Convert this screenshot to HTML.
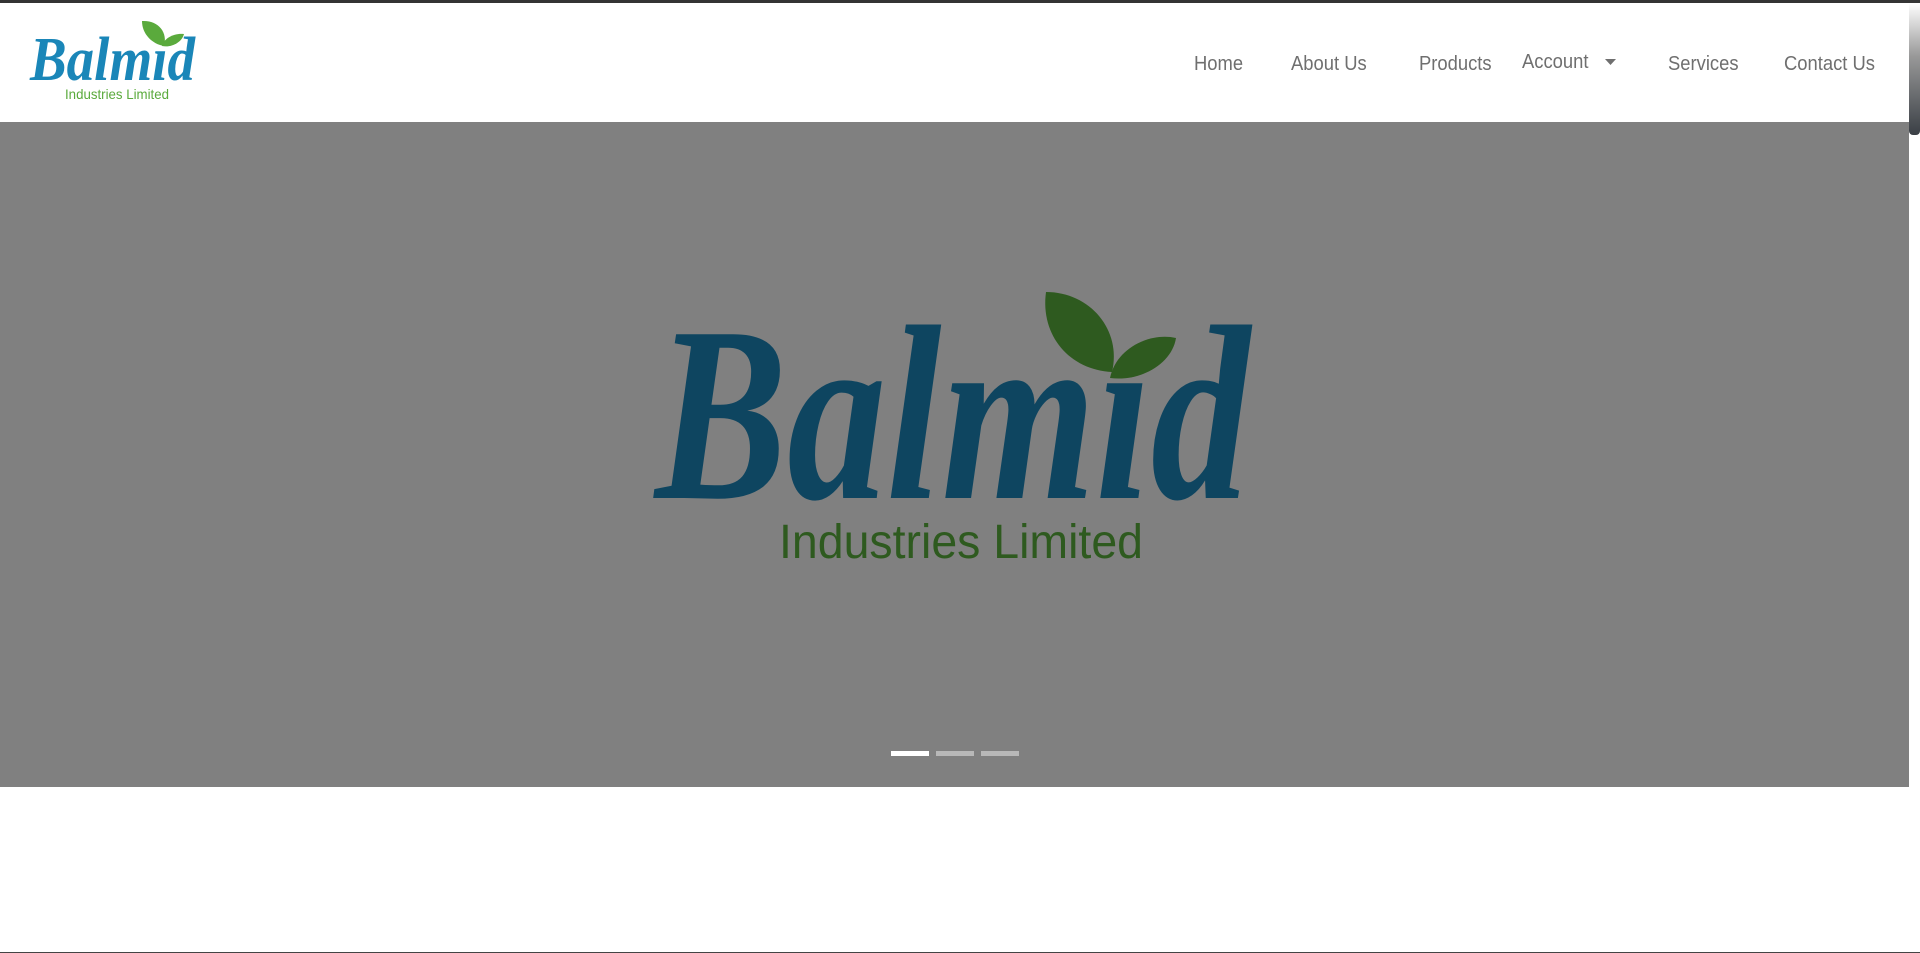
<!DOCTYPE html>
<html><head><meta charset="utf-8"><style>
html,body{margin:0;padding:0;width:1920px;height:953px;overflow:hidden;background:#fff;font-family:"Liberation Sans",sans-serif;}
.top{position:absolute;left:0;top:0;width:1920px;height:3px;background:#343434;}
.hdr{position:absolute;left:0;top:3px;width:1909px;height:119px;background:#fff;}
.nav{position:absolute;top:53px;font-size:20px;color:#6f6f6f;white-space:nowrap;transform:scaleX(.92);transform-origin:left top;}
.hero{position:absolute;left:0;top:122px;width:1909px;height:665px;background:#808080;}
.ind{position:absolute;top:751px;height:5px;width:38px;background:#b8b8b8;}
.sb{position:absolute;left:1909px;top:3px;width:11px;height:132px;background:linear-gradient(#fff,#999 40%,#3a3f45);border-radius:0 0 4px 4px;}
.bot{position:absolute;left:0;top:952px;width:1920px;height:1px;background:#444;}
</style></head><body>
<div class="top"></div>
<div class="hdr"></div>
<svg style="position:absolute;left:0;top:0" width="260" height="122">
 <path d="M142 21 C158 20 168 32 164 46 C152 44 142 34 142 21Z" fill="#5aaa3c"/>
 <path d="M162 46 C164 38 174 33 184 34 C182 42 172 48 162 46Z" fill="#5aaa3c"/>
 <text x="30" y="80" font-family="Liberation Serif" font-style="italic" font-weight="bold" font-size="62" fill="#1a86b8" textLength="165" lengthAdjust="spacingAndGlyphs">Balmıd</text>
 <text x="65" y="99" font-family="Liberation Sans" font-size="14" fill="#5aaa3c" textLength="104" lengthAdjust="spacingAndGlyphs">Industries Limited</text>
</svg>
<div class="nav" style="left:1194px">Home</div>
<div class="nav" style="left:1291px">About Us</div>
<div class="nav" style="left:1419px">Products</div>
<div class="nav" style="left:1522px;top:51px">Account</div>
<svg style="position:absolute;left:1605px;top:59px" width="11" height="6"><path d="M0 0H11L5.5 6Z" fill="#6f6f6f"/></svg>
<div class="nav" style="left:1668px">Services</div>
<div class="nav" style="left:1784px">Contact Us</div>
<div class="hero"></div>
<svg style="position:absolute;left:0;top:0" width="1909" height="787">
 <path d="M1046 292 C1090 292 1122 330 1112 372 C1070 370 1040 336 1046 292Z" fill="#2e5a1f"/>
 <path d="M1110 378 C1116 348 1150 332 1176 338 C1172 364 1140 382 1110 378Z" fill="#2e5a1f"/>
 <text x="655" y="498" font-family="Liberation Serif" font-style="italic" font-weight="bold" font-size="250" fill="#0e4560" textLength="595" lengthAdjust="spacingAndGlyphs">Balmıd</text>
 <text x="779" y="558" font-family="Liberation Sans" font-size="48" fill="#2e5a1f" textLength="364" lengthAdjust="spacingAndGlyphs">Industries Limited</text>
</svg>
<div class="ind" style="left:891px;background:#fff"></div>
<div class="ind" style="left:936px"></div>
<div class="ind" style="left:981px"></div>
<div class="sb"></div>
<div class="bot"></div>
</body></html>
